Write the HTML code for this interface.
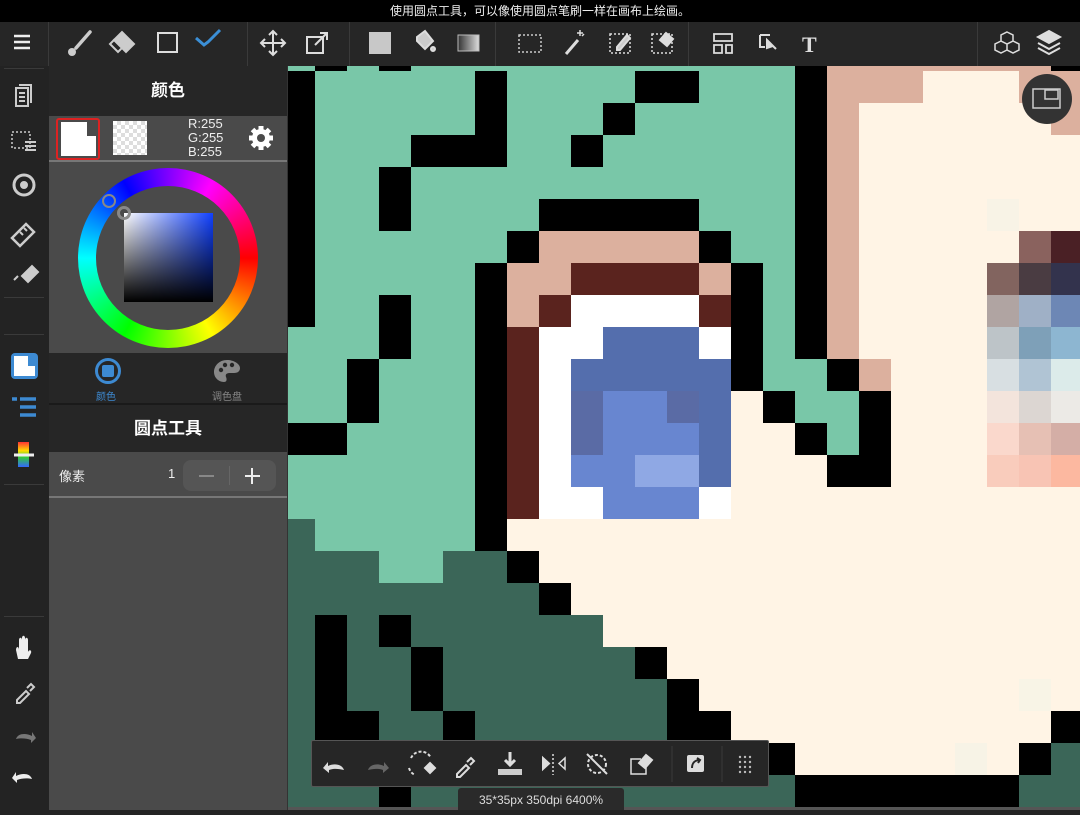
<!DOCTYPE html>
<html><head><meta charset="utf-8"><style>
*{margin:0;padding:0;box-sizing:border-box}
body{width:1080px;height:810px;overflow:hidden;background:#232323;position:relative;font-family:"Liberation Sans","Noto Sans CJK SC",sans-serif;color:#fff}
.abs{position:absolute}
.top{left:0;top:0;width:1080px;height:22px;background:#000;text-align:center;font-size:12px;line-height:22px;color:#eee}
.tb{left:0;top:22px;width:1080px;height:44px;background:#262626}
.sep{position:absolute;width:1px;background:#3a3a3a}
.rail{left:0;top:66px;width:49px;height:744px;background:#232323}
.panel{left:49px;top:66px;width:239px;height:744px;background:#4a4a4a;border-right:1px solid #333}
</style></head><body>
<div class="abs top">使用圆点工具，可以像使用圆点笔刷一样在画布上绘画。</div>
<div class="abs tb">
<div class="sep" style="left:48px;top:0;height:44px"></div>
<div class="sep" style="left:247px;top:0;height:44px"></div>
<div class="sep" style="left:349px;top:0;height:44px"></div>
<div class="sep" style="left:495px;top:0;height:44px"></div>
<div class="sep" style="left:688px;top:0;height:44px"></div>
<div class="sep" style="left:977px;top:0;height:44px"></div>
<svg class="abs" style="left:0;top:0" width="1080" height="44" fill="none" stroke="#ddd" stroke-width="2">
<path d="M14 14h16M14 20h16M14 26h16" stroke="#eee" stroke-width="2.5"/>
<path d="M90 10 L76 26" stroke="#ccc" stroke-width="3.5" stroke-linecap="round"/><circle cx="72" cy="30" r="4" fill="#ccc" stroke="none"/>
<path d="M114 18 l8-8 l12 12 l-8 8z" fill="#ccc" stroke="#ccc"/><path d="M114 18 l-4 4 l8 8 l4-4z" fill="#262626" stroke="#ccc"/>
<rect x="158" y="11" width="19" height="19" stroke="#ddd"/>
<path d="M196 16 l8 7 l4-3 l12-12" stroke="#3b8fd6" stroke-width="3"/>
<path d="M273 10v22M262 21h22M269 13l4-4 4 4M269 29l4 4 4-4M265 17l-4 4 4 4M281 17l4 4-4 4" stroke="#ddd"/>
<rect x="307" y="15" width="16" height="16"/><path d="M315 23l12-12M320 11h7v7"/>
<rect x="369" y="10" width="22" height="22" fill="#c8c8c8" stroke="none"/>
<path d="M417 15l8-6 8 10-8 8-8-8z" fill="#ccc"/><circle cx="433" cy="27" r="2" fill="#ccc"/>
<defs><linearGradient id="gg"><stop offset="0" stop-color="#333"/><stop offset="1" stop-color="#ddd"/></linearGradient></defs>
<rect x="458" y="13" width="21" height="16" fill="url(#gg)" stroke="#bbb" stroke-width="1"/>
<rect x="519" y="13" width="22" height="17" stroke-dasharray="2 2" stroke="#ccc" stroke-width="1.5"/>
<path d="M566 32l12-14" stroke-width="3"/><path d="M580 8v6M577 11h6M584 12l-2 2" stroke-width="1.5"/>
<rect x="610" y="12" width="20" height="19" stroke-dasharray="2 2" stroke-width="1.5"/><path d="M617 25l10-12 3 3-10 12h-3z" fill="#ccc"/>
<rect x="652" y="12" width="20" height="19" stroke-dasharray="2 2" stroke-width="1.5"/><path d="M660 18l6-7 7 6-6 7z" fill="#ddd"/>
<path d="M714 12h18v7h-18zM714 23h8v8h-8zM726 23h6v8h-6z" stroke-width="1.8"/>
<path d="M760 13h10M760 13v12h5" stroke-width="2"/><path d="M767 18l9 9M767 18v8l6-2z" fill="#ddd" stroke-width="2"/>
<text x="802" y="30" font-family="Liberation Serif" font-size="22" font-weight="bold" fill="#ddd" stroke="none">T</text>
<path d="M1007 10l6 3v6l-6 3-6-3v-6zM1001 19l-6 3v6l6 3 6-3M1013 19l6 3v6l-6 3-6-3v-6" stroke-width="1.5"/>
<path d="M1049 9l11 6-11 6-11-6z" fill="#ddd"/><path d="M1038 21l11 6 11-6M1038 26l11 6 11-6" stroke-width="2"/>
</svg></div>
<svg class="abs" style="left:288px;top:66px" width="792" height="744" id="cv"></svg>
<div class="abs" style="left:1022px;top:74px;width:50px;height:50px;border-radius:50%;background:#333"></div>
<svg class="abs" style="left:1022px;top:74px" width="50" height="50" fill="none" stroke="#ccc" stroke-width="1.5"><rect x="11" y="15" width="27" height="19"/><rect x="23" y="16" width="13" height="9"/></svg>
<div class="abs rail">
<div class="sep" style="left:4px;top:2px;width:40px;height:1px"></div>
<div class="sep" style="left:4px;top:231px;width:40px;height:1px"></div>
<div class="sep" style="left:4px;top:268px;width:40px;height:1px"></div>
<div class="sep" style="left:4px;top:418px;width:40px;height:1px"></div>
<div class="sep" style="left:4px;top:550px;width:40px;height:1px"></div>
<svg width="49" height="744" fill="none" stroke="#ccc" stroke-width="2">
<path d="M16 22h12v18h-12zM19 19h12v18" /><path d="M19 27h6M19 31h6M19 35h6"/>
<rect x="12" y="66" width="18" height="16" stroke-dasharray="2 2" stroke-width="1.5"/><path d="M25 76h11M25 80h11M25 84h11"/>
<circle cx="24" cy="119" r="10" stroke-width="3"/><circle cx="24" cy="119" r="3" fill="#ccc"/>
<path d="M12 172l14-14 8 8-14 14z" stroke-width="2.5"/><path d="M20 166l3 3M24 162l3 3"/>
<path d="M22 210l10-10 6 6-10 10z" fill="#ccc"/><path d="M14 214l4-4"/>
<rect x="11" y="287" width="27" height="26" rx="4" fill="#3d8ad2" stroke="none"/><path d="M14 290h14v10h7v10h-21z" fill="#fff" stroke="none"/>
<path d="M12 333h5M20 333h16M20 341h16M20 349h16" stroke="#3d8ad2" stroke-width="3.5"/>
<defs><linearGradient id="rb" x1="0" y1="0" x2="0" y2="1"><stop offset="0" stop-color="#f33"/><stop offset=".35" stop-color="#fd0"/><stop offset=".6" stop-color="#3c3"/><stop offset="1" stop-color="#36f"/></linearGradient></defs>
<rect x="18" y="376" width="11" height="25" fill="url(#rb)" stroke="none"/><path d="M14 389h20" stroke="#eee" stroke-width="3"/>
<path d="M16 584c0-4 3-4 3 0v-10c0-3 3-3 3 0v-2c0-3 3-3 3 0v2c0-3 3-3 3 0v12c1-3 4-2 3 1l-3 6h-10z" fill="#eee" stroke="none"/>
<path d="M17 634l9-9 3 3-9 9h-3z M27 622l4-4 3 3-4 4" stroke-width="2"/>
<path d="M32 673c-2-6-10-6-16-3v-4l-4 6 5 5v-3c5-2 11-2 15-1z" fill="#777" stroke="none" transform="matrix(-1 0 0 1 48 0)"/>
<path d="M32 713c-2-6-10-6-16-3v-4l-4 6 5 5v-3c5-2 11-2 15-1z" fill="#eee" stroke="none"/>
</svg></div>
<div class="abs panel">
<div class="abs" style="left:0;top:0;width:238px;height:50px;background:#262626;text-align:center;line-height:50px;font-size:17px;font-weight:bold">颜色</div>
<div class="abs" style="left:0;top:94px;width:238px;height:2px;background:#777"></div>
<div class="abs" style="left:7px;top:52px;width:44px;height:42px;border:2px solid #d22;border-radius:3px"></div>
<div class="abs" style="left:12px;top:56px;width:26px;height:33px;background:#fff"></div>
<div class="abs" style="left:12px;top:70px;width:35px;height:20px;background:#fff"></div>
<div class="abs" style="left:64px;top:55px;width:34px;height:34px;background:repeating-conic-gradient(#ddd 0 25%,#fff 0 50%) 0 0/8px 8px"></div>
<div class="abs" style="left:139px;top:51px;font-size:13px;line-height:14px;color:#eee">R:255<br>G:255<br>B:255</div>
<svg class="abs" style="left:198px;top:58px" width="28" height="28"><g fill="#fff"><circle cx="14" cy="14" r="9"/><g stroke="#fff" stroke-width="5"><path d="M14 2v24M2 14h24M5.5 5.5l17 17M22.5 5.5l-17 17"/></g></g><circle cx="14" cy="14" r="4" fill="#4a4a4a"/></svg>
<div class="abs" style="left:29px;top:102px;width:180px;height:180px;border-radius:50%;background:conic-gradient(from 90deg,#f00 0deg,#ff0 60deg,#0f0 120deg,#0ff 180deg,#00f 240deg,#f0f 300deg,#f00 360deg)"></div>
<div class="abs" style="left:47px;top:120px;width:144px;height:144px;border-radius:50%;background:#4a4a4a"></div>
<div class="abs" style="left:75px;top:147px;width:89px;height:89px;background:linear-gradient(to bottom,transparent,#000),linear-gradient(to right,#fff,#1040ff)"></div>
<div class="abs" style="left:53px;top:128px;width:14px;height:14px;border-radius:50%;border:2px solid #888"></div>
<div class="abs" style="left:68px;top:140px;width:14px;height:14px;border-radius:50%;border:3px solid #888"></div>
<div class="abs" style="left:0;top:287px;width:238px;height:50px;background:#262626"></div>
<div class="abs" style="left:46px;top:292px;width:26px;height:26px;border-radius:50%;border:3px solid #3d8ad2"></div>
<div class="abs" style="left:53px;top:299px;width:12px;height:12px;border-radius:2px;background:#3d8ad2"></div>
<div class="abs" style="left:47px;top:322px;font-size:10px;color:#3d8ad2">颜色</div>
<svg class="abs" style="left:164px;top:292px" width="28" height="26"><path d="M14 2C6 2 1 8 1 14c0 6 5 10 10 10 3 0 3-3 2-5-1-3 1-4 4-4h4c4 0 6-2 6-5C27 6 21 2 14 2z" fill="#888"/><circle cx="8" cy="12" r="2.2" fill="#262626"/><circle cx="12" cy="7" r="2.2" fill="#262626"/><circle cx="19" cy="7" r="2.2" fill="#262626"/></svg>
<div class="abs" style="left:163px;top:322px;font-size:10px;color:#888">调色盘</div>
<div class="abs" style="left:0;top:337px;width:238px;height:2px;background:#1a1a1a"></div>
<div class="abs" style="left:0;top:339px;width:238px;height:47px;background:#262626;text-align:center;line-height:47px;font-size:17px;font-weight:bold">圆点工具</div>
<div class="abs" style="left:10px;top:400px;font-size:13px;color:#eee">像素</div>
<div class="abs" style="left:119px;top:400px;font-size:13px;color:#eee">1</div>
<div class="abs" style="left:134px;top:394px;width:93px;height:31px;border-radius:8px;background:#555"></div>
<div class="abs" style="left:180px;top:400px;width:1px;height:19px;background:#666"></div>
<div class="abs" style="left:150px;top:409px;width:15px;height:2px;background:#888"></div>
<div class="abs" style="left:196px;top:409px;width:15px;height:2px;background:#eee"></div>
<div class="abs" style="left:202px;top:402px;width:2px;height:16px;background:#eee"></div>
<div class="abs" style="left:0;top:430px;width:238px;height:2px;background:#777"></div>
</div>
<div class="abs" style="left:311px;top:740px;width:458px;height:47px;background:#262626;border:1px solid #555;border-radius:2px"></div>
<svg class="abs" style="left:311px;top:740px" width="458" height="47" fill="none" stroke="#ddd" stroke-width="2">
<path d="M33 30c-2-6-10-7-16-4v-4l-5 6 6 5v-3c5-2 11-1 15 0z" fill="#ddd" stroke="none"/>
<path d="M57 30c2-6 10-7 16-4v-4l5 6-6 5v-3c-5-2-11-1-15 0z" fill="#666" stroke="none"/>
<path d="M100 18a11 11 0 0 1 20 0M98 28a11 11 0 0 0 6 7" stroke-dasharray="3 2"/><path d="M114 28l5-5 5 5-5 5z" fill="#ddd"/>
<path d="M146 34l9-9 3 3-9 9h-3zM156 22l4-4 3 3-4 4"/>
<path d="M199 12v12M194 20l5 5 5-5" stroke-width="3"/><rect x="187" y="29" width="24" height="6" fill="#ccc" stroke="none"/>
<path d="M232 18v11l6-5.5z" fill="#ddd"/><path d="M242 14v21" stroke-dasharray="2 2" stroke-width="1.5"/><path d="M254 18v11l-6-5.5z" stroke-width="1.5"/>
<circle cx="286" cy="24" r="9" stroke-dasharray="3 2"/><path d="M276 14l20 20"/>
<path d="M330 19h-10v15h15v-7" stroke-width="1.5"/><path d="M328 23l7-8 6 5-7 8z" fill="#ddd"/>
<path d="M361 6v36M411 6v36" stroke="#3a3a3a" stroke-width="1"/>
<rect x="376" y="15" width="17" height="17" rx="2" fill="#ddd" stroke="none"/><path d="M381 28c0-5 3-8 8-8M386 18l3 2-2 3" stroke="#262626" stroke-width="2"/>
<g fill="#bbb" stroke="none"><circle cx="429" cy="17" r="1.2"/><circle cx="434" cy="17" r="1.2"/><circle cx="439" cy="17" r="1.2"/><circle cx="429" cy="22" r="1.2"/><circle cx="434" cy="22" r="1.2"/><circle cx="439" cy="22" r="1.2"/><circle cx="429" cy="27" r="1.2"/><circle cx="434" cy="27" r="1.2"/><circle cx="439" cy="27" r="1.2"/><circle cx="429" cy="32" r="1.2"/><circle cx="434" cy="32" r="1.2"/><circle cx="439" cy="32" r="1.2"/></g>
</svg>
<div class="abs" style="left:458px;top:788px;width:166px;height:22px;background:#2a2a2a;border-radius:3px 3px 0 0;text-align:center;font-size:12px;line-height:24px;color:#ddd">35*35px 350dpi 6400%</div>
<script>
var rows=["MKMKMMMMMMMMMMMMKSSSSSSSK","KMMMMMKMMMMKKMMMKSSSCCCSS","KMMMMMKMMMKMMMMMKSCCCCCCS","KMMMKKKMMKMMMMMMKSCCCCCCC","KMMKMMMMMMMMMMMMKSCCCCCCC","KMMKMMMMKKKKKMMMKSCCCCCCC","KMMMMMMKSSSSSKMMKSCCCCCCC","KMMMMMKSSBBBBSKMKSCCCCCCC","KMMKMMKSBWWWWBKMKSCCCCCCC","MMMKMMKBWW111WKMKSCCCCCCC","MMKMMMKBW11111KMMKSCCCCCC","MMKMMMKBW42241CKMMKCCCCCC","KKMMMMKBW42221CCKMKCCCCCC","MMMMMMKBW22331CCCKKCCCCCC","MMMMMMKBWW222WCCCCCCCCCCC","DMMMMMKCCCCCCCCCCCCCCCCCC","DDDMMDDKCCCCCCCCCCCCCCCCC","DDDDDDDDKCCCCCCCCCCCCCCCC","DKDKDDDDDDCCCCCCCCCCCCCCC","DKDDKDDDDDDKCCCCCCCCCCCCC","DKDDKDDDDDDDKCCCCCCCCCCCC","DKKDDKDDDDDDKKCCCCCCCCCCK","DDDDDDDDDDDDDDDKCCCCCCCKD","DDDKDDDDDDDDDDDDKKKKKKKDD"];
var col={K:"#000",M:"#79c7a8",D:"#3b6658",S:"#dcb09e",B:"#5a231e",W:"#fff",C:"#fff4e5","1":"#546ead","2":"#6886d0","3":"#8fa8e4","4":"#5a6ba5"};
var mos={"22,5":"#f8f3e6","23,6":"#8a625e","24,6":"#4a2025","22,7":"#82645f","23,7":"#4a3c42","24,7":"#33334d","22,8":"#b0a4a2","23,8":"#9fb0c6","24,8":"#6d87b5","22,9":"#bdc4c8","23,9":"#7ea0b8","24,9":"#8db6d1","22,10":"#d8dfe2","23,10":"#b0c4d4","24,10":"#dcebea","22,11":"#f3e4dc","23,11":"#dcd6d2","24,11":"#eceae6","22,12":"#fad8cc","23,12":"#e6c0b4","24,12":"#d4aea6","22,13":"#f9ccbc","23,13":"#f8c4b4","24,13":"#fcb8a0","23,20":"#f8f4e6","21,22":"#f7f3e6"};
var s="";
for(var r=0;r<rows.length;r++)for(var c=0;c<25;c++){var f=mos[c+","+r]||col[rows[r][c]];s+='<rect x="'+(32*c-5)+'" y="'+(32*r-27)+'" width="33" height="33" fill="'+f+'"/>';}
s+='<rect x="0" y="741" width="792" height="3" fill="#555"/>';
document.getElementById("cv").innerHTML=s;
</script>
</body></html>
